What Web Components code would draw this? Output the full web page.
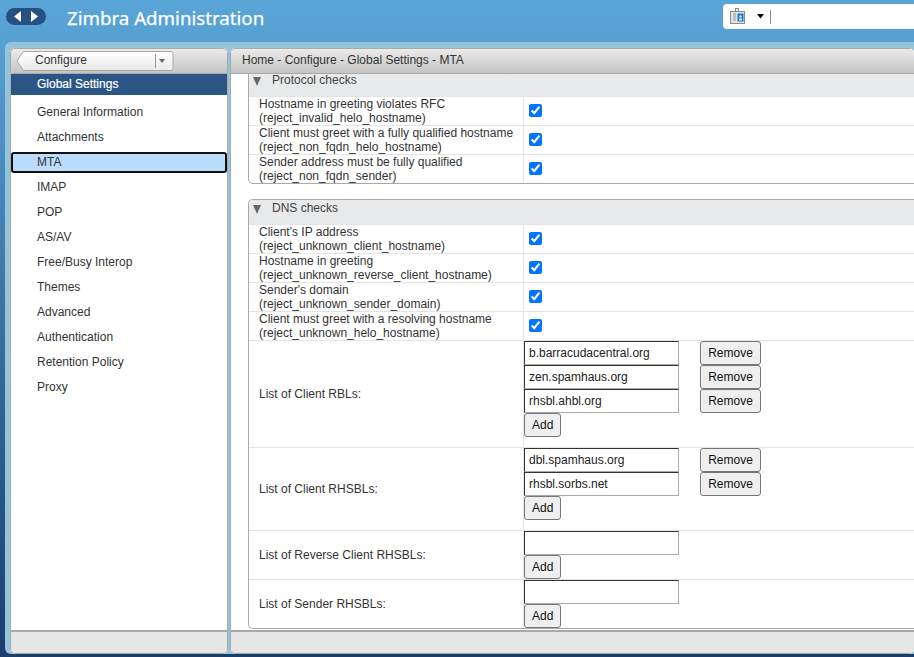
<!DOCTYPE html>
<html><head><meta charset="utf-8">
<style>
html,body{margin:0;padding:0;height:657px;overflow:hidden}
body{font-family:"Liberation Sans",Arial,sans-serif;font-size:12px;color:#333}
</style></head><body>
<za-app>
  <za-header slot="header"></za-header>
  <za-nav slot="nav"></za-nav>
  <za-content slot="content">
    <za-section title="Protocol checks" class="first">
      <za-check>Hostname in greeting violates RFC<br>(reject_invalid_helo_hostname)</za-check>
      <za-check>Client must greet with a fully qualified hostname<br>(reject_non_fqdn_helo_hostname)</za-check>
      <za-check>Sender address must be fully qualified<br>(reject_non_fqdn_sender)</za-check>
    </za-section>
    <za-section title="DNS checks">
      <za-check>Client's IP address<br>(reject_unknown_client_hostname)</za-check>
      <za-check>Hostname in greeting<br>(reject_unknown_reverse_client_hostname)</za-check>
      <za-check>Sender's domain<br>(reject_unknown_sender_domain)</za-check>
      <za-check>Client must greet with a resolving hostname<br>(reject_unknown_helo_hostname)</za-check>
      <za-list label="List of Client RBLs:" values="b.barracudacentral.org,zen.spamhaus.org,rhsbl.ahbl.org" h="107"></za-list>
      <za-list label="List of Client RHSBLs:" values="dbl.spamhaus.org,rhsbl.sorbs.net" h="83"></za-list>
      <za-list label="List of Reverse Client RHSBLs:" values="" h="49"></za-list>
      <za-list label="List of Sender RHSBLs:" values="" h="49" last></za-list>
    </za-section>
  </za-content>
</za-app>
<script>
const def=(n,html,extra)=>{customElements.define(n,class extends HTMLElement{
  connectedCallback(){ if(this.shadowRoot)return; const s=this.attachShadow({mode:'open'}); s.innerHTML=typeof html==='function'?html(this):html; }
});};
def('za-app',`<style>
:host{display:block;width:914px;height:657px;overflow:hidden;background:linear-gradient(#5aa5d7 0,#559dd0 60px,#3a74a8 300px,#1b3d6c 657px)}
.head{height:42px}
.shell{margin-left:5px;height:612px;background:#94c3da;border-radius:6px 0 0 6px;padding:6px 0 3px 5px;box-sizing:border-box;display:flex;gap:2px;margin-top:0}
.l{width:218px;flex:none}.r{flex:1;min-width:0}
</style><div class="head"><slot name="header"></slot></div>
<div class="shell"><div class="l"><slot name="nav"></slot></div><div class="r"><slot name="content"></slot></div></div>`);
def('za-panel',`<style>
:host{display:flex;flex-direction:column;height:606px;box-sizing:border-box;background:#fff;border-radius:5px;overflow:hidden;position:relative}
.t{height:26px;flex:none;box-sizing:border-box;background:linear-gradient(#ebebeb,#c4c4c4);border:1px solid #a9a9a9;border-radius:5px 5px 0 0;display:flex;align-items:center;overflow:hidden;padding-bottom:2px}
.m{flex:1;min-height:0;overflow:hidden;border-left:1px solid #a9a9a9;border-right:1px solid #a9a9a9}
.f{height:24px;flex:none;box-sizing:border-box;background:#e6e6e6;border:1px solid #a9a9a9;border-top-width:2px;border-radius:0 0 5px 5px}
:host([open]) .t,:host([open]) .f{border-right:0;border-radius:5px 0 0 0}
:host([open]) .f{border-radius:0 0 0 5px}
:host([open]) .m{border-right:0}
</style><div class="t"><slot name="top"></slot></div><div class="m"><slot></slot></div><div class="f"></div>`);
def('za-header',`<style>
:host{display:flex;align-items:center;height:42px;padding-left:6px;box-sizing:border-box;font-family:"Noto Sans","Open Sans",sans-serif}
.nav{width:40px;height:17px;background:#264f82;border-radius:9px;display:flex;align-items:center;justify-content:space-between;padding:0 8px;box-sizing:border-box;margin-bottom:9px}
.title{margin-left:21px;color:#fff;font-size:18.7px;margin-bottom:8px;-webkit-text-stroke:.25px #fff}
.search{margin-left:auto;width:191px;height:25px;background:#fff;border-radius:4px 0 0 4px;margin-bottom:9px;display:flex;align-items:center}
.caret{width:1px;height:14px;background:#888;margin-left:6px}
</style>
<div class="nav"><svg width="7" height="11" viewBox="0 0 7 11"><path d="M7 0V11L0 5.5Z" fill="#fff"/></svg><svg width="7" height="11" viewBox="0 0 7 11"><path d="M0 0V11L7 5.5Z" fill="#fff"/></svg></div>
<span class="title">Zimbra Administration</span>
<div class="search">
<svg style="margin-left:7px" width="15" height="17" viewBox="0 0 15 17"><rect x="5.5" y=".5" width="3" height="4" fill="none" stroke="#888"/><rect x=".5" y="3.5" width="14" height="12" fill="#e4e4e0" stroke="#8a8a8a"/><path d="M3 6h3M3 8h3M3 10h3M3 12h3" stroke="#999"/><rect x="7.5" y="5.5" width="6" height="8" fill="#1a78d8"/><path d="M9 12.5h3v-2h-3z" fill="#d8e8f8"/><circle cx="10.5" cy="8.5" r="1.2" fill="#d8e8f8"/></svg>
<svg style="margin-left:12px" width="7" height="5" viewBox="0 0 7 5"><path d="M0 0H7L3.5 4.5Z" fill="#000"/></svg>
<span class="caret"></span>
</div>`);
def('za-nav',`<style>
:host{display:block}
.cfg{margin:2px 0 0 5px;width:158px;height:20px;position:relative;display:flex;font-size:12px;color:#333;line-height:18px}
.cfg svg{position:absolute;left:0;top:0}
.lab{position:absolute;left:19px;top:0}
.arr{position:absolute;left:139px;top:3px;width:1px;height:14px;background:#999}
.dd{position:absolute;left:143px;top:8px;width:0;height:0;border:3.5px solid transparent;border-top:4px solid #666;border-bottom:0}
.head{height:21px;background:#2a5585;color:#fff;line-height:21px;padding-left:26px;margin:0 0 5px;-webkit-text-stroke:.2px #fff}
.item{height:25px;line-height:25px;padding-left:26px;box-sizing:border-box;color:#333}
.sel{background:#bcdcfb;border:2px solid #111;border-radius:3px;height:21px;line-height:17px;padding-left:24px;margin:2px 0 2px}
</style>
<za-panel><div slot="top" class="cfg">
<svg width="158" height="20" viewBox="0 0 158 20"><path d="M.8 10 7.5.5H155a2 2 0 0 1 2 2V17.5a2 2 0 0 1-2 2H7.5Z" fill="url(#g)" stroke="#a8a8a8"/><defs><linearGradient id="g" x1="0" y1="0" x2="0" y2="1"><stop offset="0" stop-color="#fff"/><stop offset="1" stop-color="#e9e9e9"/></linearGradient></defs></svg>
<span class="lab">Configure</span><span class="arr"></span><span class="dd"></span></div>
<div class="head">Global Settings</div>
<div class="item">General Information</div>
<div class="item">Attachments</div>
<div class="item sel">MTA</div>
<div class="item">IMAP</div>
<div class="item">POP</div>
<div class="item">AS/AV</div>
<div class="item">Free/Busy Interop</div>
<div class="item">Themes</div>
<div class="item">Advanced</div>
<div class="item">Authentication</div>
<div class="item">Retention Policy</div>
<div class="item">Proxy</div>
</za-panel>`);
def('za-content',`<style>
:host{display:block}
.crumb{padding-left:11px;color:#333;font-size:12px}
.scroll{padding-left:17px;height:100%;box-sizing:border-box}
</style><za-panel open><div slot="top" class="crumb">Home - Configure - Global Settings - MTA</div><div class="scroll"><slot></slot></div></za-panel>`);
def('za-section',h=>`<style>
:host{display:block;box-sizing:border-box;border:1px solid #a9a9a9;border-right:0;border-radius:5px 0 0 5px;margin-bottom:15px}
:host(.first){border-top:0;border-radius:0 0 0 5px}
.h{height:24px;background:#e8e9eb;display:flex;font-size:12px;padding-left:4px;color:#444;border-radius:4px 0 0 0}
:host(.first) .h{height:22px}
.tri{width:0;height:0;border:4.5px solid transparent;border-top:9px solid #666;border-bottom:0;margin-top:5px}
:host(.first) .tri{margin-top:3px}
.t{margin-left:11px;margin-top:1px;line-height:14px}
:host(.first) .t{margin-top:-1px}
</style><div class="h"><span class="tri"></span><span class="t">${h.getAttribute('title')}</span></div><slot></slot>`);
def('za-check',`<style>
:host{display:flex;height:29px;box-sizing:border-box;border-top:1px solid #e4e4e4}
.a{width:275px;flex:none;box-sizing:border-box;padding:0 0 0 10px;line-height:14px;font-size:12px;color:#333;border-right:1px solid #e4e4e4}
.b{padding-left:5px;display:flex;align-items:center}
input{margin:0 0 2px;width:13px;height:13px}
</style><div class="a"><slot></slot></div><div class="b"><input type="checkbox" checked></div>`);
def('za-list',h=>{
 const vals=(h.getAttribute('values')||'').split(',');
 const rows=vals.map(v=>`<div class="row"><za-field>${v}</za-field>${v?'<za-btn class="rm">Remove</za-btn>':''}</div>`).join('');
 return `<style>
:host{display:flex;height:${h.getAttribute('h')}px;box-sizing:border-box;border-top:1px solid #e4e4e4}
.a{width:275px;flex:none;box-sizing:border-box;padding-left:10px;font-size:12px;color:#333;border-right:1px solid #e4e4e4;display:flex;align-items:center}
.b{display:flex;flex-direction:column;align-items:flex-start}
.row{display:flex;gap:21px}
</style><div class="a">${h.getAttribute('label')}</div><div class="b">${rows}<za-btn>Add</za-btn></div>`});
def('za-field',`<style>
:host{display:block;width:155px;height:24px;box-sizing:border-box;border:1px solid;border-color:#333 #aaa #aaa #333;padding-left:4px;line-height:22px;font-size:12px;color:#222;background:#fff}
</style><slot></slot>`);
def('za-btn',`<style>
:host{display:block;height:24px;box-sizing:border-box;border:1px solid #777;border-radius:3px;background:#efefef;padding:0 7px;line-height:22px;font-size:12px;color:#111;text-align:center}
:host(.rm){width:61px;padding:0}
</style><slot></slot>`);
</script>
</body></html>
